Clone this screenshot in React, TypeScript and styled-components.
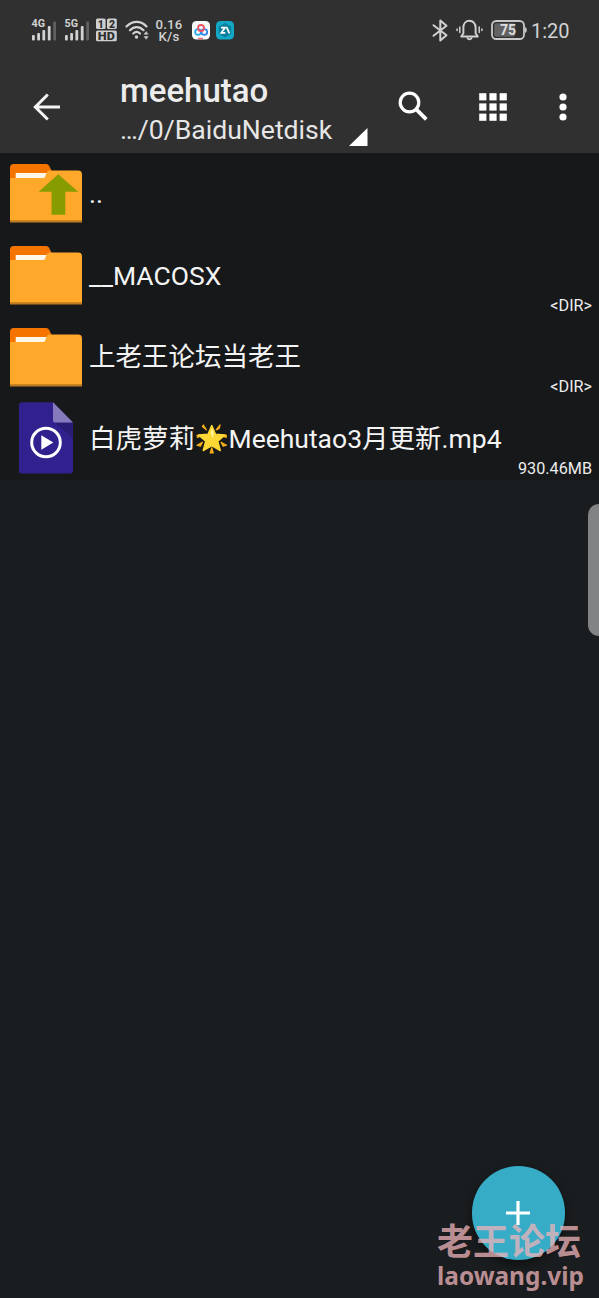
import React from "react";
import styled, { createGlobalStyle } from "styled-components";

const GlobalStyle = createGlobalStyle`
  * { box-sizing: border-box; }
  html, body { margin: 0; padding: 0; background: #1a1d1f; }
  body { font-family: Roboto, "Noto Sans CJK SC", sans-serif; overflow: hidden; }
  svg { display: block; flex: none; }
`;

const Screen = styled.div`
  position: relative;
  display: flex;
  flex-direction: column;
  width: 599px;
  height: 1298px;
  background: #1a1d1f;
  color: #f4f4f4;
  overflow: hidden;
`;

const StatusBar = styled.div`
  display: flex;
  align-items: center;
  justify-content: space-between;
  height: 60px;
  padding: 0 29px 0 31px;
  background: #303030;
  color: #d2d2d2;
`;

const StatusGroup = styled.div`
  display: flex;
  align-items: center;
`;

const Spacer = styled.div<{ $w: number }>`
  flex: none;
  width: ${(p) => p.$w}px;
`;

const NetSpeed = styled.div`
  display: flex;
  flex-direction: column;
  align-items: center;
  width: 28px;
  padding-top: 2px;
  font-size: 13.2px;
  font-weight: 500;
  line-height: 12.4px;
  letter-spacing: 0.2px;
  white-space: nowrap;
`;

const Clock = styled.div`
  width: 39px;
  padding-top: 1px;
  font-size: 20px;
  line-height: 24px;
  white-space: nowrap;
`;

const Toolbar = styled.div`
  display: flex;
  height: 93px;
  background: #303030;
`;

const IconButton = styled.button<{ $w: number }>`
  display: flex;
  align-items: center;
  justify-content: center;
  width: ${(p) => p.$w}px;
  height: 93px;
  padding: 0;
  border: 0;
  background: none;
`;

const TitleBlock = styled.div`
  display: flex;
  width: 278px;
  padding: 10px 0 0 27px;
`;

const Titles = styled.div`
  display: flex;
  flex-direction: column;
  width: 229px;
  white-space: nowrap;
`;

const Title = styled.div`
  padding-top: 1px;
  font-size: 33px;
  font-weight: 500;
  line-height: 39px;
  color: #ececec;
`;

const Path = styled.div`
  font-size: 26.6px;
  line-height: 40px;
  color: #e6e6e6;
`;

const Corner = styled.svg`
  margin-top: 58px;
`;

const List = styled.div`
  display: flex;
  flex-direction: column;
  background: #17181a;
`;

const Row = styled.div`
  display: flex;
  align-items: center;
  height: 81.7px;
  padding: 0 7px 0 10px;
`;

const IconSlot = styled.div`
  display: flex;
  justify-content: center;
  width: 72px;
  margin-right: 7px;
  padding-bottom: 1px;
`;

const Name = styled.div`
  display: flex;
  align-items: center;
  flex: 1;
  font-size: 26.5px;
  line-height: 40px;
  white-space: nowrap;
`;

const Meta = styled.div`
  align-self: flex-end;
  width: 0;
  display: flex;
  justify-content: flex-end;
  font-size: 16.2px;
  line-height: 20.6px;
  white-space: nowrap;
  color: #ececec;
`;

const ScrollThumb = styled.div`
  position: absolute;
  top: 504px;
  right: 0;
  width: 11px;
  height: 132px;
  border-radius: 11px 0 0 11px;
  background: #828385;
`;

const Fab = styled.button`
  position: absolute;
  left: 471.5px;
  top: 1166px;
  width: 93.5px;
  height: 93.5px;
  display: flex;
  align-items: center;
  justify-content: center;
  padding: 0;
  border: 0;
  border-radius: 50%;
  background: #36acc7;
  box-shadow: 0 4px 10px rgba(0, 0, 0, 0.5);
`;

const Watermark = styled.div`
  position: absolute;
  left: 437px;
  top: 1218px;
  color: rgba(238, 180, 186, 0.76);
  font-weight: 700;
  white-space: nowrap;
`;

const WatermarkName = styled.div`
  font-family: "Noto Sans CJK SC", sans-serif;
  font-size: 36px;
  line-height: 42px;
`;

const WatermarkSite = styled.div`
  padding-top: 2px;
  font-family: "Noto Sans", sans-serif;
  font-size: 24.4px;
  line-height: 28px;
`;

const Signal = ({ label }: { label: string }) => (
  <svg width="26" height="24" viewBox="0 0 26 24" fill="#d2d2d2">
    <text x="0.5" y="8.6" fontSize="10.4" fontWeight="700" textLength="13.5" lengthAdjust="spacingAndGlyphs" fontFamily="Roboto, sans-serif">{label}</text>
    <rect x="1" y="17" width="2.8" height="5.5" rx="1" />
    <rect x="6.2" y="15" width="2.8" height="7.5" rx="1" />
    <rect x="11.4" y="12" width="2.8" height="10.5" rx="1" />
    <rect x="16.8" y="8" width="2.8" height="14.5" rx="1" />
    <rect x="22.2" y="3.5" width="2.8" height="19" rx="1" fill="#606060" />
  </svg>
);

const SimBadge = () => (
  <svg width="21" height="24" viewBox="0 0 21 24" fill="#cfcfcf" fontFamily="Roboto, sans-serif" fontWeight="900">
    <rect x="0" y="0.5" width="9.6" height="10.5" rx="1.5" />
    <rect x="11" y="0.5" width="9.8" height="10.5" rx="1.5" />
    <rect x="0" y="12.5" width="20.8" height="10.8" rx="1.5" />
    <text x="4.9" y="9.6" fontSize="10.5" textAnchor="middle" fill="#303030">1</text>
    <text x="16" y="9.6" fontSize="10.5" textAnchor="middle" fill="#303030">2</text>
    <text x="1.8" y="21.8" fontSize="10.8" textLength="17" lengthAdjust="spacingAndGlyphs" fill="#303030">HD</text>
  </svg>
);

const Wifi = () => (
  <svg width="25" height="20" viewBox="0 0 25 20" fill="none" stroke="#d2d2d2" strokeWidth="2.2" strokeLinecap="round">
    <path d="M1.5 6.5C7.5 0.3 16 0.3 21.5 6.5M5 10.2C9 6 14.5 6 18.5 10.2M8.3 13.5C10.3 11.6 13 11.6 15 13.5" />
    <circle cx="11.5" cy="17" r="1.7" fill="#d2d2d2" stroke="none" />
    <path d="M21 11.8l-1.8 2.4h3.6zM21 19l-1.8-2.4h3.6z" fill="#d2d2d2" strokeWidth=".6" />
  </svg>
);

const CloudApp = () => (
  <svg width="18" height="19" viewBox="0 0 18 19">
    <rect width="18" height="18.5" rx="4.5" fill="#f7fafb" />
    <g fill="none" strokeWidth="1.8">
      <circle cx="6" cy="11" r="2.9" stroke="#25a9e8" />
      <circle cx="12.3" cy="11" r="2.9" stroke="#2f86e9" />
      <circle cx="9" cy="7" r="3" stroke="#ee5265" />
    </g>
    <path d="M6 17.5h5" stroke="#ee6671" strokeWidth="1.5" />
  </svg>
);

const ArchiverApp = () => (
  <svg width="18" height="19" viewBox="0 0 18 19">
    <rect width="18" height="18.5" rx="4.5" fill="#12a8c6" />
    <path d="M9 2l6.2 3.5v7.3L9 16.5l-6.2-3.7V5.5z" fill="#087f9d" />
    <path d="M5 6.6h4.2L5.3 11.8h4M10.6 6.1l2.8 6.2" fill="none" stroke="#fff" strokeWidth="1.7" />
  </svg>
);

const Bluetooth = () => (
  <svg width="17" height="23" viewBox="0 0 17 23" fill="none" stroke="#d2d2d2" strokeWidth="2" strokeLinejoin="round" strokeLinecap="round">
    <path d="M1.5 6.2L14.5 16.2L8.3 21.5V1.5L14.5 6.8L1.5 16.8" />
  </svg>
);

const Bell = () => (
  <svg width="27" height="22" viewBox="0 0 27 22" fill="none" stroke="#d2d2d2" strokeWidth="1.9" strokeLinecap="round" strokeLinejoin="round">
    <path d="M5.2 17.5h16.6l-2.2-3.2V8.7C19.6 4.6 17 1.8 13.5 1.8S7.4 4.6 7.4 8.7v5.6z" />
    <path d="M11.5 19.2c.8 1.6 3.2 1.6 4 0" />
    <path d="M3.8 8v5.5M1.1 10v1.4M23.2 8v5.5M25.9 10v1.4" strokeWidth="1.5" />
  </svg>
);

const Battery = () => (
  <svg width="36" height="20" viewBox="0 0 36 20">
    <rect x="1" y="1" width="32" height="18" rx="4.3" fill="none" stroke="#c9c9c9" strokeWidth="1.8" />
    <path d="M34 7q1.8 .5 1.8 3t-1.8 3z" fill="#c9c9c9" />
    <rect x="3.2" y="3.2" width="21" height="13.6" rx="2.5" fill="#626262" />
    <text x="17" y="15" textAnchor="middle" fontSize="14" fontWeight="700" fontFamily="Roboto, sans-serif" fill="#dedede">75</text>
  </svg>
);

const Folder = ({ up = false }: { up?: boolean }) => (
  <svg width="72" height="60" viewBox="0.3 0 72 60">
    <path d="M0.3 16V4.5Q0.3 1 4 1H36.5Q38.5 1 39.4 2.8L43 10V18H0.3z" fill="#f57400" />
    <path d="M6 10H38V15H6z" fill="#fff8e8" />
    <path d="M0.3 15H33.5Q34.8 15 35.5 13.5L36.8 9.8Q37.7 7.6 40 7.6H68.5Q72.3 7.6 72.3 11.4V59.3H0.3z" fill="#ffa82a" />
    <path d="M0.3 57.3H72.3V59.3H0.3z" fill="#bc7b20" />
    {up && <path d="M48.5 11.3L68.5 28.8H55.6V51.7H41.8V28.8H29z" fill="#879c00" />}
  </svg>
);

const VideoFile = () => (
  <svg width="54" height="72" viewBox="0 0 54 72">
    <path d="M3 .3H34L54 20.5V68.5Q54 71.5 51 71.5H3Q0 71.5 0 68.5V3.3Q0 .3 3 .3z" fill="#30218f" />
    <path d="M34 20.5H54V36.5L36 20.5z" fill="#281c75" />
    <path d="M34 .3L54 20.5H36Q34 20.5 34 18.5z" fill="#877abc" />
    <circle cx="27" cy="40.5" r="14.3" fill="none" stroke="#fff" strokeWidth="3" />
    <path d="M22.3 33.3L34.3 40.5L22.3 47.7z" fill="#fff" />
  </svg>
);

const GlowingStar = () => (
  <svg width="33.5" height="31.5" viewBox="0 0 34 32">
    <path d="M8.5 2l3 5-4-3.5zM25.5 2l-1 3.5-3 1.5zM2 12.5l5 .3-4.5 2zM32 12.5l-5 .3 4.5 2zM2 22.5l5.5-3-2 4zM32 22.5l-5.5-3 2 4zM17 25l1.6 5.5h-3.2z" fill="#f5ad19" stroke="#f5ad19" strokeWidth="1.2" strokeLinejoin="round" />
    <path d="M17 2.5L20.7 11.3L30.5 12.2L23.1 18.6L25.6 28L17 22.9L8.4 28L10.9 18.6L3.5 12.2L13.3 11.3z" fill="#fdd835" stroke="#fdd835" strokeWidth="1.5" strokeLinejoin="round" />
    <path d="M17.3 4.5L19.2 12.2L18 15.2L16 10.5z" fill="#fff59d" />
  </svg>
);

export default function App() {
  return (
    <>
      <GlobalStyle />
      <Screen>
        <StatusBar>
          <StatusGroup>
            <Signal label="4G" />
            <Spacer $w={7} />
            <Signal label="5G" />
            <Spacer $w={6} />
            <SimBadge />
            <Spacer $w={8} />
            <Wifi />
            <Spacer $w={5} />
            <NetSpeed><span>0.16</span><span>K/s</span></NetSpeed>
            <Spacer $w={9} />
            <CloudApp />
            <Spacer $w={6} />
            <ArchiverApp />
          </StatusGroup>
          <StatusGroup>
            <Bluetooth />
            <Spacer $w={7} />
            <Bell />
            <Spacer $w={8} />
            <Battery />
            <Spacer $w={4} />
            <Clock>1:20</Clock>
          </StatusGroup>
        </StatusBar>
        <Toolbar>
          <IconButton $w={93} aria-label="Back">
            <svg width="28" height="28" viewBox="0 0 28 28" fill="none" stroke="#f4f4f4" strokeWidth="3">
              <path d="M27 14H3M14.8 1.5L2.3 14L14.8 26.5" />
            </svg>
          </IconButton>
          <TitleBlock>
            <Titles>
              <Title>meehutao</Title>
              <Path>…/0/BaiduNetdisk</Path>
            </Titles>
            <Corner width="19" height="18" viewBox="0 0 19 18"><path d="M0 18L18.5 0V18z" fill="#fff" /></Corner>
          </TitleBlock>
          <IconButton $w={83} aria-label="Search">
            <svg width="30" height="31" viewBox="0 0 30 31" fill="none" stroke="#fff">
              <circle cx="11.5" cy="11.5" r="9.3" strokeWidth="3.2" />
              <path d="M18.3 18.3L28.3 28.3" strokeWidth="3.8" />
            </svg>
          </IconButton>
          <IconButton $w={77} aria-label="Grid view">
            <svg width="28" height="28" viewBox="0 0 28 28" fill="#fff">
              {[0.2, 10.4, 20.6].map((y) => [0.2, 10.4, 20.6].map((x) => (
                <rect key={`${x}-${y}`} x={x} y={y} width="7.2" height="7.2" />
              )))}
            </svg>
          </IconButton>
          <IconButton $w={64} aria-label="More">
            <svg width="8" height="28" viewBox="0 0 8 28" fill="#fff">
              <circle cx="4" cy="4" r="3.6" />
              <circle cx="4" cy="14" r="3.6" />
              <circle cx="4" cy="24" r="3.6" />
            </svg>
          </IconButton>
        </Toolbar>
        <List>
          <Row><IconSlot><Folder up /></IconSlot><Name>..</Name></Row>
          <Row><IconSlot><Folder /></IconSlot><Name>__MACOSX</Name><Meta>&lt;DIR&gt;</Meta></Row>
          <Row><IconSlot><Folder /></IconSlot><Name>上老王论坛当老王</Name><Meta>&lt;DIR&gt;</Meta></Row>
          <Row>
            <IconSlot><VideoFile /></IconSlot>
            <Name><span>白虎萝莉</span><GlowingStar /><span>Meehutao3月更新.mp4</span></Name>
            <Meta>930.46MB</Meta>
          </Row>
        </List>
        <ScrollThumb />
        <Fab aria-label="Add">
          <svg width="24" height="24" viewBox="0 0 24 24"><path d="M12 0V24M0 12H24" stroke="#fff" strokeWidth="3.2" /></svg>
        </Fab>
        <Watermark>
          <WatermarkName>老王论坛</WatermarkName>
          <WatermarkSite>laowang.vip</WatermarkSite>
        </Watermark>
      </Screen>
    </>
  );
}
